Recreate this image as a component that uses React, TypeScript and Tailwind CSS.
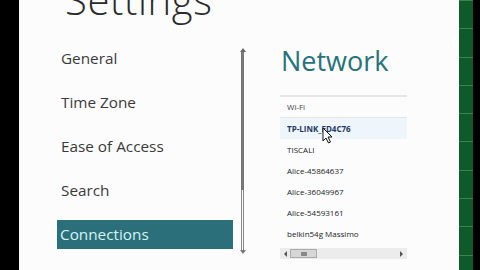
import React from "react";

const networks = [
  "TISCALI",
  "Alice-45864637",
  "Alice-36049967",
  "Alice-54593161",
  "belkin54g Massimo",
];

const menu = ["General", "Time Zone", "Ease of Access", "Search"];

export default function App() {
  return (
    <div
      className="flex w-[480px] h-[270px] overflow-hidden bg-black"
      style={{ fontFamily: '"Open Sans", "Noto Sans", sans-serif' }}
    >
      <div className="w-[19px] shrink-0 bg-black" />
      <main className="relative w-[440px] shrink-0 bg-[#fcfcfc] overflow-hidden">
        <h1 className="ml-[46px] mt-[-20px] text-[40px] leading-[40px] font-light text-[#2a2a2a] tracking-[0.6px]">
          Settings
        </h1>
        <div className="flex items-start">
          <nav className="ml-[38px] mt-[23.5px] w-[176px] flex flex-col gap-[15px]">
            {menu.map((m) => (
              <div key={m} className="h-[29px] pl-[4px] text-[15.3px] leading-[29px] text-[#3a3a3a]">
                {m}
              </div>
            ))}
            <div className="h-[29px] pl-[3px] text-[15.3px] leading-[29px] text-[#d4f4f4] bg-[#2b6f7a]">
              Connections
            </div>
          </nav>
          <div className="ml-[7px] mt-[28px] w-[5px] h-[206px] flex flex-col items-center">
            <div className="w-0 h-0 border-l-[3px] border-r-[3px] border-b-[4px] border-l-transparent border-r-transparent border-b-[#666]" />
            <div className="w-[3px] h-[138px] bg-[#777]" />
            <div className="w-[3px] flex-1 border-l border-r border-[#888]" />
            <div className="w-0 h-0 border-l-[3px] border-r-[3px] border-t-[4px] border-l-transparent border-r-transparent border-t-[#777]" />
          </div>
          <section className="ml-[35px] mt-[27px] w-[127px] relative">
            <div className="ml-[1px] text-[27px] leading-[28px] text-[#26737a]">Network</div>
            <div className="mt-[20px] border-t-2 border-[#e6e6e6] text-[8px] text-[#222]">
              <div className="h-[21px] leading-[20px] pl-[7px] border-b border-[#e4e4e4] text-[#444]">Wi-Fi</div>
              <div className="h-[21px] leading-[21px] pl-[7px] bg-[#eef5fb] font-bold text-[#1d3a66]">
                TP-LINK_FD4C76
              </div>
              {networks.map((n) => (
                <div key={n} className="h-[21px] leading-[21px] pl-[7px]">
                  {n}
                </div>
              ))}
              <div className="mt-[4px] h-[11px] bg-[#ececec] flex items-center px-[4px] gap-[3px]">
                <div className="w-0 h-0 border-t-[3px] border-b-[3px] border-r-[3px] border-t-transparent border-b-transparent border-r-[#555]" />
                <div className="w-[27px] h-[9px] bg-[#d6d6d6] border border-[#aaa] flex items-center justify-center">
                  <div className="w-[6px] h-[4px] bg-[#888]" />
                </div>
                <div className="flex-1" />
                <div className="w-0 h-0 border-t-[3px] border-b-[3px] border-l-[3px] border-t-transparent border-b-transparent border-l-[#555]" />
              </div>
            </div>
            <svg
              className="absolute left-[42px] top-[80px]"
              width="11"
              height="17"
              viewBox="0 0 11 17"
            >
              <path
                d="M1 1 L1 14 L4 11 L6.5 16 L8.5 15 L6 10 L10 10 Z"
                fill="#fff"
                stroke="#111"
                strokeWidth="1"
                strokeLinejoin="round"
              />
            </svg>
          </section>
        </div>
        <svg className="absolute right-[-8px] top-[34px]" width="16" height="16" viewBox="0 0 16 16">
          <circle cx="8" cy="8" r="6.5" fill="none" stroke="#fff" strokeWidth="2" />
        </svg>
      </main>
      <div className="w-[14px] shrink-0 bg-[#0e5a2b] flex flex-col">
        {Array.from({ length: 10 }).map((_, i) => (
          <div key={i} className="h-[28.3px] shrink-0 border-t border-[#3f8050]" />
        ))}
      </div>
      <div className="w-[7px] shrink-0 bg-black" />
    </div>
  );
}
